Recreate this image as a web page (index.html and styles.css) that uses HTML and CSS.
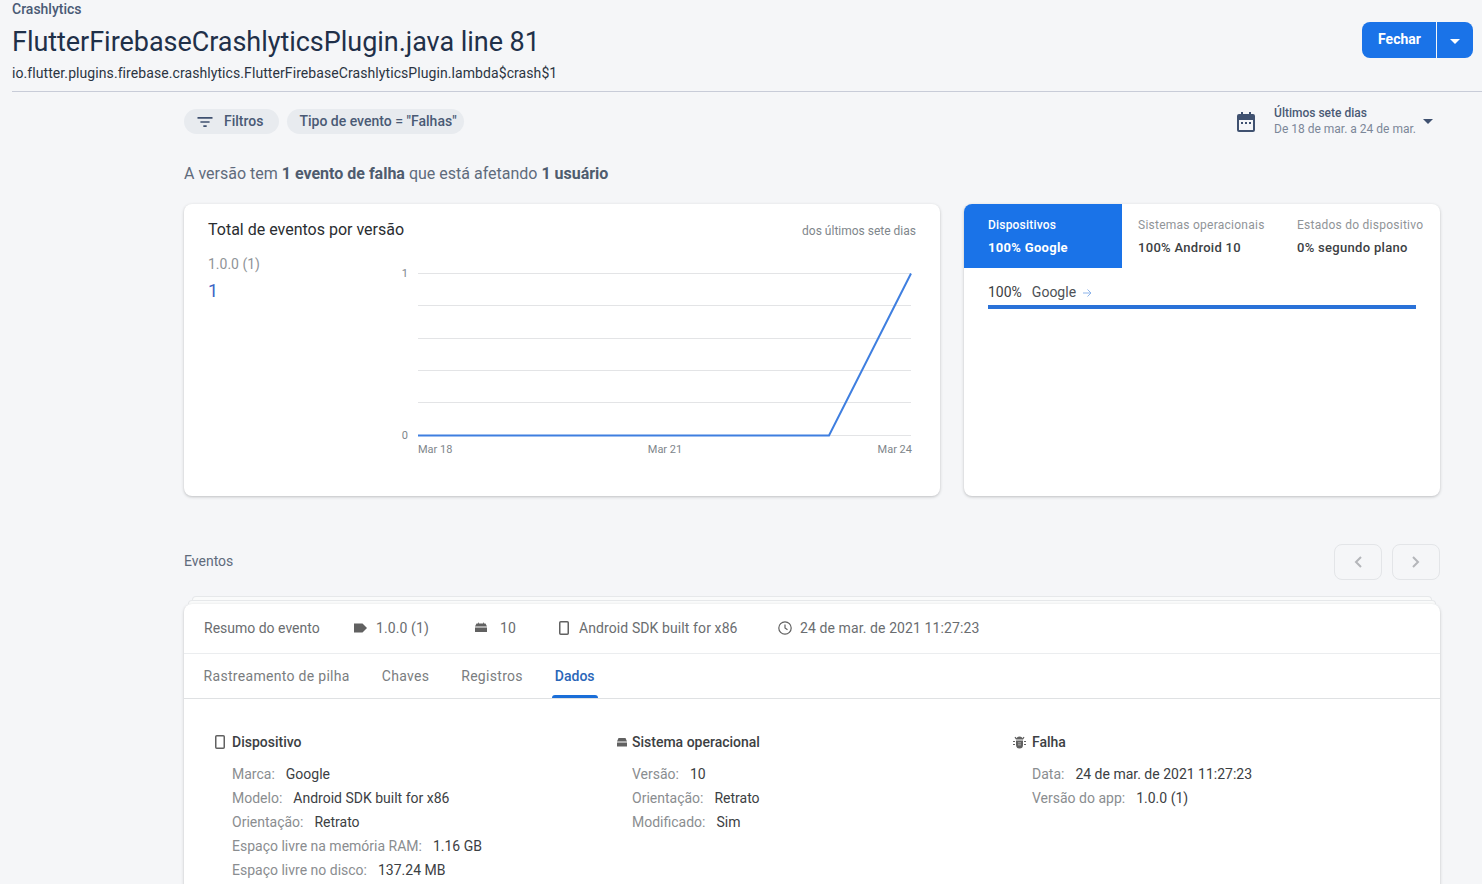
FILE: index.html
```html
<!DOCTYPE html>
<html lang="en">
<head>
    <meta charset="UTF-8">
    <meta name="viewport" content="width=device-width, initial-scale=1.0">
    <title>Crashlytics</title>
    <link rel="stylesheet" href="styles.css">
</head>
<body>
    <header class="page-header">
        <div class="header-text">
            <div class="crumb">Crashlytics</div>
            <h1 class="issue-title">FlutterFirebaseCrashlyticsPlugin.java line 81</h1>
            <div class="issue-sub">io.flutter.plugins.firebase.crashlytics.FlutterFirebaseCrashlyticsPlugin.lambda$crash$1</div>
        </div>
        <div class="close-group">
            <button class="close-btn">Fechar</button>
            <button class="close-arrow"><span class="caret caret-white"></span></button>
        </div>
    </header>

    <main class="content">
        <div class="filter-row">
            <div class="chip chip-filter">
                <svg width="20" height="20" viewBox="0 0 24 24" fill="#3f5170"><path d="M3 6h18v2H3zM6.500 11h11v2h-11zM10 16h4v2h-4z"/></svg>
                <span>Filtros</span>
            </div>
            <div class="chip">Tipo de evento = "Falhas"</div>
            <div class="date-picker">
                <svg width="24" height="24" viewBox="0 0 24 24" fill="#3f5170"><path d="M7 2h2v2h6V2h2v2h2a2 2 0 0 1 2 2v14a2 2 0 0 1-2 2H5a2 2 0 0 1-2-2V6a2 2 0 0 1 2-2h2zM5 10v10h14V10zM7 12h2v2H7zM11 12h2v2h-2zM15 12h2v2h-2z"/></svg>
                <div class="date-text">
                    <div class="date-main">Últimos sete dias</div>
                    <div class="date-range">De 18 de mar. a 24 de mar.</div>
                </div>
                <span class="caret caret-dark"></span>
            </div>
        </div>

        <p class="headline">A versão tem <b>1 evento de falha</b> que está afetando <b>1 usuário</b></p>

        <div class="cards">
            <section class="card chart-card">
                <div class="chart-head">
                    <h2>Total de eventos por versão</h2>
                    <span class="chart-note">dos últimos sete dias</span>
                </div>
                <div class="chart-body">
                    <div class="legend">
                        <div class="legend-name">1.0.0 (1)</div>
                        <div class="legend-value">1</div>
                    </div>
                    <svg class="chart" width="528" height="200" viewBox="0 0 528 200">
                        <g stroke="#e3e4e6" stroke-width="1">
                            <line x1="18" x2="511" y1="10.500" y2="10.500"/>
                            <line x1="18" x2="511" y1="42.500" y2="42.500"/>
                            <line x1="18" x2="511" y1="75.500" y2="75.500"/>
                            <line x1="18" x2="511" y1="107.500" y2="107.500"/>
                            <line x1="18" x2="511" y1="139.500" y2="139.500"/>
                            <line x1="18" x2="511" y1="172.500" y2="172.500"/>
                        </g>
                        <polyline points="18,172.500 429,172.500 511,10.500" fill="none" stroke="#3f7fe0" stroke-width="2"/>
                        <g class="axis">
                            <text x="8" y="14" text-anchor="end">1</text>
                            <text x="8" y="176" text-anchor="end">0</text>
                            <text x="18" y="190">Mar 18</text>
                            <text x="265" y="190" text-anchor="middle">Mar 21</text>
                            <text x="512" y="190" text-anchor="end">Mar 24</text>
                        </g>
                    </svg>
                </div>
            </section>

            <section class="card stats-card">
                <div class="stat-tabs">
                    <div class="stat-tab active">
                        <div class="stat-name">Dispositivos</div>
                        <div class="stat-value">100% Google</div>
                    </div>
                    <div class="stat-tab tab-os">
                        <div class="stat-name">Sistemas operacionais</div>
                        <div class="stat-value">100% Android 10</div>
                    </div>
                    <div class="stat-tab tab-state">
                        <div class="stat-name">Estados do dispositivo</div>
                        <div class="stat-value">0% segundo plano</div>
                    </div>
                </div>
                <div class="stat-detail">
                    <div class="stat-line">
                        <span class="stat-pct">100%</span>
                        <span>Google</span>
                        <svg width="10" height="10" viewBox="0 0 10 10" fill="none" stroke="#8db4ea" stroke-width="1"><path d="M1 5h8M5.500 1.500 9 5 5.500 8.500"/></svg>
                    </div>
                    <div class="stat-bar"></div>
                </div>
            </section>
        </div>

        <div class="events-head">
            <span class="events-title">Eventos</span>
            <div class="pager">
                <button class="page-btn"><svg width="24" height="24" viewBox="0 0 24 24" fill="none" stroke="#b4b6ba" stroke-width="2"><path d="M15 7l-5 5 5 5"/></svg></button>
                <button class="page-btn"><svg width="24" height="24" viewBox="0 0 24 24" fill="none" stroke="#b4b6ba" stroke-width="2"><path d="M9 7l5 5-5 5"/></svg></button>
            </div>
        </div>

        <div class="stack-edge edge-back"></div>
        <div class="stack-edge edge-front"></div>
        <section class="card event-card">
            <div class="event-summary">
                <span class="summary-title">Resumo do evento</span>
                <span class="summary-item item-version">
                    <svg width="16" height="16" viewBox="0 0 16 16" fill="#616161"><path d="M2 3.500h8.500L15 8l-4.500 4.500H2z"/></svg>
                    1.0.0 (1)
                </span>
                <span class="summary-item item-os">
                    <svg class="android" width="14" height="14" viewBox="0 0 14 14" fill="#616161"><path d="M1 6.500h12V11H1zM2.500 2.500h9L13 5.500H1zM4 1l1 1.500H4zM10 1 9 2.500h1z"/></svg>
                    10
                </span>
                <span class="summary-item item-device">
                    <svg width="16" height="16" viewBox="0 0 16 16" fill="none" stroke="#616161" stroke-width="1.500"><rect x="3.750" y="1.750" width="8.500" height="12.500" rx="1"/></svg>
                    Android SDK built for x86
                </span>
                <span class="summary-item item-time">
                    <svg width="16" height="16" viewBox="0 0 16 16" fill="none" stroke="#616161" stroke-width="1.200"><circle cx="8" cy="8" r="6.200"/><path d="M8 4.500V8l2.500 1.800"/></svg>
                    24 de mar. de 2021 11:27:23
                </span>
            </div>
            <nav class="event-tabs">
                <span class="event-tab">Rastreamento de pilha</span>
                <span class="event-tab">Chaves</span>
                <span class="event-tab">Registros</span>
                <span class="event-tab active">Dados</span>
            </nav>
            <div class="event-data">
                <div class="data-col">
                    <h3>
                        <svg width="16" height="16" viewBox="0 0 16 16" fill="none" stroke="#616161" stroke-width="1.500"><rect x="3.750" y="1.750" width="8.500" height="12.500" rx="1"/></svg>
                        Dispositivo
                    </h3>
                    <div class="data-row"><span class="data-key">Marca:</span>Google</div>
                    <div class="data-row"><span class="data-key">Modelo:</span>Android SDK built for x86</div>
                    <div class="data-row"><span class="data-key">Orientação:</span>Retrato</div>
                    <div class="data-row"><span class="data-key">Espaço livre na memória RAM:</span>1.16 GB</div>
                    <div class="data-row"><span class="data-key">Espaço livre no disco:</span>137.24 MB</div>
                </div>
                <div class="data-col">
                    <h3>
                        <svg width="16" height="16" viewBox="0 0 16 16" fill="#616161"><path d="M6.500 4h7L15 7.500H5zM5 8.500h10v4H5z"/></svg>
                        Sistema operacional
                    </h3>
                    <div class="data-row"><span class="data-key">Versão:</span>10</div>
                    <div class="data-row"><span class="data-key">Orientação:</span>Retrato</div>
                    <div class="data-row"><span class="data-key">Modificado:</span>Sim</div>
                </div>
                <div class="data-col">
                    <h3>
                        <svg width="16" height="16" viewBox="0.500 0 16 16" fill="#616161"><path d="M5 5.500a3 3 0 0 1 6 0zM4.500 6.500h7V11a3.500 3.500 0 0 1-7 0zM1.500 7h2v1h-2zM12.500 7h2v1h-2zM1.500 10h2v1h-2zM12.500 10h2v1h-2zM3 3.500l1-.7 1.500 2-1 .7zM13 3.500l-1-.7-1.500 2 1 .7z"/><path d="M6.500 8.500h3v.8h-3zM6.500 10.500h3v.8h-3z" fill="#c8c8c8"/></svg>
                        Falha
                    </h3>
                    <div class="data-row"><span class="data-key">Data:</span>24 de mar. de 2021 11:27:23</div>
                    <div class="data-row"><span class="data-key">Versão do app:</span>1.0.0 (1)</div>
                </div>
            </div>
        </section>
    </main>
</body>
</html>
```

FILE: styles.css
```css
body {
    font-family: 'Roboto', sans-serif;
    margin: 0;
    background-color: #f5f6f8;
    color: #212121;
    height: 884px;
    overflow: hidden;
}

h1, h2, h3, p {
    margin: 0;
    font-weight: normal;
}

button {
    font-family: inherit;
    border: none;
    padding: 0;
}

.page-header {
    display: flex;
    justify-content: space-between;
    height: 91px;
    margin-left: 12px;
    border-bottom: 1px solid #c8ccd8;
}

.crumb {
    font-size: 14px;
    line-height: 18px;
    font-weight: 500;
    color: #4a5a75;
}

.issue-title {
    font-size: 27px;
    line-height: 32px;
    margin-top: 8px;
    color: #1f3049;
    letter-spacing: -0.04px;
}

.issue-sub {
    font-size: 14px;
    line-height: 18px;
    margin-top: 6px;
    color: #2b3442;
    letter-spacing: 0.08px;
}

.close-group {
    display: flex;
    height: 36px;
    margin-top: 22px;
    margin-right: 9px;
}

.close-btn {
    width: 74px;
    padding-bottom: 2px;
    padding-left: 1px;
    background-color: #1a73e8;
    color: #ffffff;
    font-size: 14px;
    font-weight: 700;
    border-radius: 8px 0 0 8px;
}

.close-arrow {
    width: 36px;
    margin-left: 1px;
    background-color: #1a73e8;
    border-radius: 0 8px 8px 0;
    display: flex;
    justify-content: center;
    align-items: center;
}

.caret {
    display: block;
    width: 0;
    height: 0;
    border-left: 5px solid transparent;
    border-right: 5px solid transparent;
}

.caret-white {
    border-top: 5px solid #ffffff;
    margin-top: 2px;
}

.caret-dark {
    border-top: 5px solid #3f5170;
}

.content {
    margin-left: 184px;
    width: 1256px;
}

.filter-row {
    display: flex;
    align-items: center;
    height: 59px;
    gap: 8px;
}

.chip {
    display: flex;
    align-items: center;
    box-sizing: border-box;
    height: 25px;
    padding: 0 7px 2px 12px;
    border-radius: 13px;
    background-color: #e8ebef;
    font-size: 14px;
    color: #4a5a75;
    font-weight: 500;
}

.chip-filter {
    padding: 0 16px 0 11px;
    gap: 9px;
}

.chip-filter span {
    margin-bottom: 2px;
}

.date-picker {
    display: flex;
    align-items: center;
    margin-left: auto;
    margin-right: 7px;
    gap: 16px;
}

.date-text {
    line-height: 16px;
    font-size: 12px;
    margin-top: -1px;
}

.date-main {
    color: #4a5a75;
    font-weight: 500;
}

.date-range {
    color: #7c8798;
}

.date-picker .caret-dark {
    margin-left: -9px;
}

.headline {
    font-size: 16px;
    line-height: 20px;
    margin-top: 13px;
    color: #5f6b7c;
}

.headline b {
    font-weight: 700;
    color: #4f5c6e;
}

.card {
    background-color: #ffffff;
    border-radius: 8px;
    box-shadow: 0 1px 3px rgba(60, 64, 67, 0.3);
}

.cards {
    display: flex;
    gap: 24px;
    margin-top: 20px;
}

.chart-card {
    width: 756px;
    height: 292px;
    box-sizing: border-box;
    padding: 15px 24px 0;
}

.chart-head {
    display: flex;
    justify-content: space-between;
    align-items: center;
    height: 20px;
}

.chart-head h2 {
    font-size: 16px;
    color: #2a2d31;
}

.chart-note {
    font-size: 12px;
    color: #80868b;
    margin-top: 4px;
}

.chart-body {
    display: flex;
    justify-content: space-between;
    margin-top: 15px;
}

.legend-name {
    font-size: 14px;
    line-height: 20px;
    color: #8f9498;
}

.legend-value {
    font-size: 18px;
    line-height: 24px;
    margin-top: 5px;
    color: #3c64c4;
}

.chart {
    margin-right: -12px;
    margin-top: 9px;
    display: block;
}

.axis text {
    font-size: 11px;
    fill: #80868b;
}

.stats-card {
    width: 476px;
    height: 292px;
}

.stat-tabs {
    display: flex;
    height: 64px;
}

.stat-tab {
    box-sizing: border-box;
    padding-top: 13px;
}

.stat-tab.active {
    width: 158px;
    padding-left: 24px;
    background-color: #1a73e8;
    border-radius: 8px 0 0 0;
}

.tab-os {
    width: 159px;
    padding-left: 16px;
}

.tab-state {
    padding-left: 16px;
}

.stat-name {
    font-size: 12px;
    line-height: 16px;
    color: #909498;
    letter-spacing: 0.25px;
}

.stat-value {
    font-size: 13px;
    line-height: 16px;
    margin-top: 7px;
    font-weight: 500;
    color: #3c4043;
    letter-spacing: 0.3px;
}

.active .stat-name {
    color: #ffffff;
    font-weight: 500;
    letter-spacing: 0.2px;
}

.active .stat-value {
    color: #ffffff;
    font-weight: 700;
}

.stat-detail {
    padding: 0 24px;
}

.stat-line {
    display: flex;
    align-items: center;
    gap: 10px;
    height: 18px;
    margin-top: 15px;
    font-size: 14px;
    color: #4d5156;
}

.stat-pct {
    color: #3c4043;
}

.stat-line svg {
    margin-left: -4px;
    margin-top: 2px;
}

.stat-bar {
    height: 4px;
    margin-top: 4px;
    background-color: #2a72d8;
}

.events-head {
    display: flex;
    justify-content: space-between;
    align-items: center;
    height: 36px;
    margin-top: 48px;
}

.events-title {
    font-size: 14px;
    color: #5f6b7c;
    margin-bottom: 2px;
}

.pager {
    display: flex;
    gap: 10px;
}

.page-btn {
    width: 48px;
    height: 36px;
    border: 1px solid #e3e5e8;
    border-radius: 8px;
    background-color: #f5f6f8;
    display: flex;
    justify-content: center;
    align-items: center;
}

.stack-edge {
    height: 4px;
    border: 1px solid #e6e8ea;
    border-bottom: none;
    border-radius: 8px 8px 0 0;
    box-sizing: border-box;
    background-color: #fafbfb;
}

.edge-back {
    margin: 16px 8px 0;
}

.edge-front {
    margin: 0 4px;
}

.event-card {
    border-radius: 8px 8px 0 0;
}

.event-summary {
    display: flex;
    align-items: center;
    box-sizing: border-box;
    height: 50px;
    padding: 0 0 2px 20px;
    border-bottom: 1px solid #ebedef;
    font-size: 14px;
    color: #6a6d70;
}

.summary-title {
    width: 148px;
}

.summary-item {
    display: flex;
    align-items: center;
    gap: 6px;
    letter-spacing: 0.1px;
}

.item-version {
    width: 122px;
    gap: 8px;
}

.item-os {
    width: 83px;
    gap: 12px;
}

.item-device {
    width: 221px;
    gap: 7px;
    margin-left: -1px;
}

.item-time {
    gap: 7px;
}

.event-tabs {
    display: flex;
    gap: 32px;
    height: 44px;
    padding-left: 19.6px;
    border-bottom: 1px solid #dfe1e3;
    font-size: 14px;
    color: #7a7d80;
    letter-spacing: 0.3px;
}

.event-tab {
    position: relative;
    line-height: 45px;
}

.event-tab.active {
    color: #2a66b8;
    font-weight: 500;
    letter-spacing: 0;
}

.event-tab.active::after {
    content: '';
    position: absolute;
    left: -3px;
    right: -3px;
    bottom: 0;
    height: 3px;
    border-radius: 3px 3px 0 0;
    background-color: #1a6ed8;
}

.event-data {
    display: flex;
    padding: 31px 0 0 30px;
    height: 200px;
    box-sizing: border-box;
    font-size: 14px;
}

.data-col {
    width: 400px;
}

.data-col h3 {
    display: flex;
    align-items: center;
    gap: 4px;
    height: 24px;
    font-size: 14px;
    font-weight: 500;
    color: #3c4043;
    margin-bottom: 8px;
    margin-left: -2px;
}

.data-row {
    line-height: 24px;
    margin-left: 18px;
    color: #3c4043;
}

.data-key {
    color: #8a8d90;
    margin-right: 11px;
}
```
